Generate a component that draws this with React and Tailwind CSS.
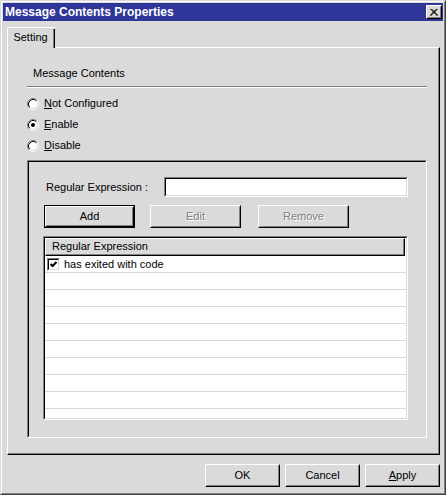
import React from "react";

const font = { fontFamily: '"Liberation Sans", Arial, sans-serif' };

function Radio({ checked }) {
  return (
    <svg width="12" height="12" viewBox="0 0 12 12" className="shrink-0">
      <circle cx="6" cy="6" r="4.5" fill="#ffffff" />
      <path d="M2.11 9.89 A5.5 5.5 0 0 1 9.89 2.11" fill="none" stroke="#808080" strokeWidth="1" />
      <path d="M9.89 2.11 A5.5 5.5 0 0 1 2.11 9.89" fill="none" stroke="#ffffff" strokeWidth="1" />
      <path d="M2.82 9.18 A4.5 4.5 0 0 1 9.18 2.82" fill="none" stroke="#000000" strokeWidth="1" />
      <path d="M9.18 2.82 A4.5 4.5 0 0 1 2.82 9.18" fill="none" stroke="#dadada" strokeWidth="1" />
      {checked && <circle cx="6" cy="6" r="2" fill="#000000" />}
    </svg>
  );
}

function Check() {
  return (
    <div className="w-[13px] h-[13px] shrink-0 border border-t-[#808080] border-l-[#808080] border-r-white border-b-white">
      <div className="w-full h-full border border-t-black border-l-black border-r-[#dadada] border-b-[#dadada] bg-white flex items-center justify-center">
        <svg width="9" height="9" viewBox="0 0 9 9">
          <path d="M1.5 4 L3.5 6 L7.5 2" fill="none" stroke="#000" strokeWidth="2" />
        </svg>
      </div>
    </div>
  );
}

function Btn({ children, w, def, disabled }) {
  const inner = (
    <div className="w-full h-full border border-t-white border-l-white border-r-black border-b-black">
      <div
        className={
          "w-full h-full border border-t-[#dadada] border-l-[#dadada] border-r-[#808080] border-b-[#808080] flex items-center justify-center text-[11px] font-normal " +
          (disabled ? "text-[#808080] [text-shadow:1px_1px_0_#ffffff]" : "text-black")
        }
      >
        {children}
      </div>
    </div>
  );
  return (
    <div className={"h-[23px] shrink-0 " + (def ? "border border-black" : "")} style={{ width: w }}>
      {inner}
    </div>
  );
}

export default function App() {
  const rows = Array.from({ length: 10 });
  return (
    <div style={font} className="w-[446px] h-[495px] bg-[#dadada] text-black text-[11px] border border-t-[#dadada] border-l-[#dadada] border-r-[#404040] border-b-[#404040]">
      <div className="w-full h-full border border-t-white border-l-white border-r-[#808080] border-b-[#808080] p-[1px] flex flex-col">
        {/* title bar */}
        <div className="h-[18px] bg-[#2f3699] flex items-center justify-between shrink-0">
          <div className="text-white font-bold text-[12px] pl-[2px] leading-none">Message Contents Properties</div>
          <div className="w-[16px] h-[14px] mr-[1px] border border-t-white border-l-white border-r-black border-b-black">
            <div className="w-full h-full bg-[#dadada] border border-t-[#dadada] border-l-[#dadada] border-r-[#808080] border-b-[#808080] flex items-center justify-center">
              <svg width="8" height="7" viewBox="0 0 8 7">
                <path d="M0.5 0 L7.5 7 M1.5 0 L8 6.5 M7.5 0 L0.5 7 M6.5 0 L0 6.5" stroke="#000" strokeWidth="1" fill="none" />
              </svg>
            </div>
          </div>
        </div>

        {/* tab strip */}
        <div className="mt-[6px] ml-[4px] flex shrink-0 relative z-10">
          <div className="h-[21px] w-[48px] bg-[#dadada] border-t border-l border-white rounded-tl-[2px] flex">
            <div className="flex-1 flex items-center justify-center pb-[2px]">Setting</div>
            <div className="w-[1px] bg-[#808080] mt-[1px]" />
            <div className="w-[1px] bg-black mt-[1px]" />
          </div>
        </div>

        {/* panel */}
        <div className="ml-[4px] w-[433px] h-[408px] -mt-[1px] border-t border-l border-white border-r border-b border-r-black border-b-black shrink-0">
          <div className="w-full h-full border-r border-b border-[#808080] flex flex-col">
            <div className="mt-[19px] ml-[25px] h-[13px] leading-[13px]">Message Contents</div>
            <div className="mt-[6px] ml-[19px] w-[400px]">
              <div className="h-[1px] bg-[#808080]" />
              <div className="h-[1px] bg-white" />
            </div>
            <div className="mt-[5px] ml-[19px] flex flex-col">
              <div className="h-[21px] flex items-center gap-[5px]">
                <Radio />
                <span><span className="underline">N</span>ot Configured</span>
              </div>
              <div className="h-[21px] flex items-center gap-[5px]">
                <Radio checked />
                <span><span className="underline">E</span>nable</span>
              </div>
              <div className="h-[21px] flex items-center gap-[5px]">
                <Radio />
                <span><span className="underline">D</span>isable</span>
              </div>
            </div>

            {/* group box */}
            <div className="mt-[4px] ml-[19px] w-[400px] h-[278px] border border-t-[#808080] border-l-[#808080] border-r-white border-b-white">
              <div className="w-full h-full border border-t-black border-l-black border-r-[#dadada] border-b-[#dadada] flex flex-col">
                <div className="mt-[15px] flex items-center h-[20px]">
                  <div className="ml-[17px] w-[118px]">Regular Expression :</div>
                  <div className="w-[244px] h-[20px] border border-t-[#808080] border-l-[#808080] border-r-white border-b-white">
                    <div className="w-full h-full bg-white border border-t-black border-l-black border-r-[#dadada] border-b-[#dadada]" />
                  </div>
                </div>
                <div className="mt-[8px] ml-[15px] flex">
                  <Btn w={91} def>Add</Btn>
                  <div className="ml-[15px]"><Btn w={91} disabled>Edit</Btn></div>
                  <div className="ml-[17px]"><Btn w={91} disabled>Remove</Btn></div>
                </div>
                <div className="mt-[8px] ml-[14px] w-[365px] h-[184px] border border-t-[#808080] border-l-[#808080] border-r-white border-b-white">
                  <div className="w-full h-full border border-t-black border-l-black border-r-[#dadada] border-b-[#dadada] bg-white flex flex-col overflow-hidden">
                    <div className="h-[18px] w-[360px] shrink-0 border border-t-white border-l-white border-r-black border-b-black bg-[#dadada]">
                      <div className="h-full border-r border-b border-[#808080] flex items-center pl-[6px]">Regular Expression</div>
                    </div>
                    {rows.map((_, i) => (
                      <div key={i} className="h-[17px] shrink-0 border-b border-[#d8d8d8] flex items-center pl-[2px] gap-[4px]">
                        {i === 0 && (
                          <>
                            <Check />
                            <span>has exited with code</span>
                          </>
                        )}
                      </div>
                    ))}
                  </div>
                </div>
              </div>
            </div>
          </div>
        </div>

        {/* bottom buttons */}
        <div className="mt-[9px] flex justify-end pr-[3px] gap-[5px] shrink-0">
          <Btn w={75}>OK</Btn>
          <Btn w={75}>Cancel</Btn>
          <Btn w={75}><span><span className="underline">A</span>pply</span></Btn>
        </div>
      </div>
    </div>
  );
}
